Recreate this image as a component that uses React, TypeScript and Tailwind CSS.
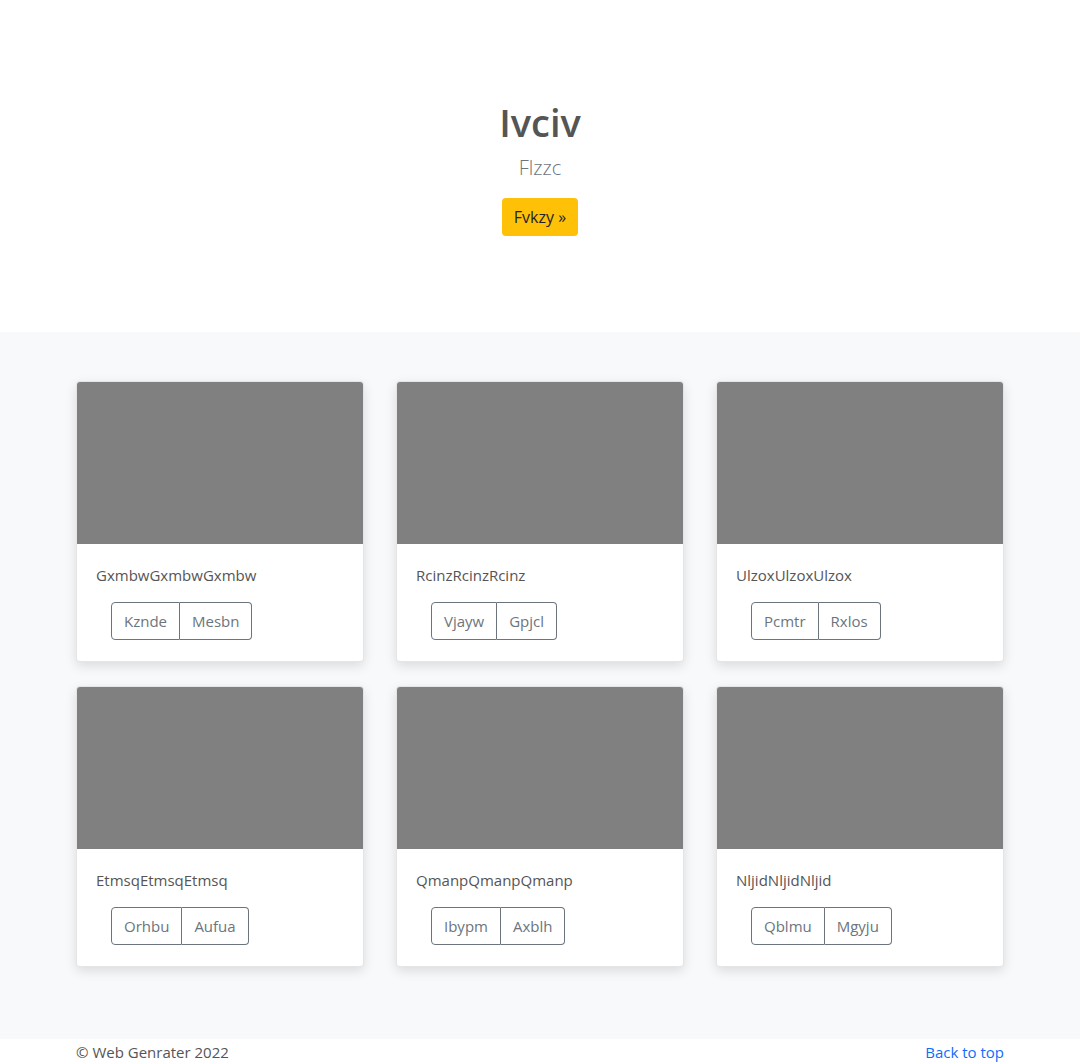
import React from "react";

const cards = [
  { t: "GxmbwGxmbwGxmbw", a: "Kznde", b: "Mesbn" },
  { t: "RcinzRcinzRcinz", a: "Vjayw", b: "Gpjcl" },
  { t: "UlzoxUlzoxUlzox", a: "Pcmtr", b: "Rxlos" },
  { t: "EtmsqEtmsqEtmsq", a: "Orhbu", b: "Aufua" },
  { t: "QmanpQmanpQmanp", a: "Ibypm", b: "Axblh" },
  { t: "NljidNljidNljid", a: "Qblmu", b: "Mgyju" },
];

export default function App() {
  return (
    <div className="min-h-[1064px] bg-white text-[#212529]" style={{ fontFamily: '"Open Sans", sans-serif' }}>
      <section className="h-[332px] flex flex-col items-center pt-[96px]">
        <h1 className="text-[38px] leading-[52px] font-semibold text-[#555]">Ivciv</h1>
        <p className="mt-[5px] text-[20px] leading-[30px] font-light text-[#6c757d]">Flzzc</p>
        <a className="mt-[15px] h-[38px] px-[12px] flex items-center rounded-[4px] bg-[#ffc107] text-[16px] text-[#212529]">Fvkzy »</a>
      </section>
      <section className="bg-[#f8f9fa] pt-[49px] pb-[72px]">
        <div className="w-[928px] mx-auto grid grid-cols-3 gap-x-[32px] gap-y-[24px]">
          {cards.map((c) => (
            <div key={c.t} className="bg-white rounded-[4px] overflow-hidden shadow-[0_4px_12px_rgba(0,0,0,0.12)] border border-[rgba(0,0,0,0.1)]">
              <div className="h-[162px] bg-[#808080]" />
              <div className="px-[19px] pt-[20px] pb-[21px]">
                <p className="text-[15px] leading-[22px] text-[#555]">{c.t}</p>
                <div className="mt-[16px] ml-[15px] inline-flex text-[15px] text-[#6c757d]">
                  <span className="h-[38px] px-[12px] flex items-center border border-[#6c757d] rounded-l-[4px]">{c.a}</span>
                  <span className="h-[38px] px-[12px] flex items-center border border-l-0 border-[#6c757d] rounded-r-[4px]">{c.b}</span>
                </div>
              </div>
            </div>
          ))}
        </div>
      </section>
      <footer className="w-[928px] mx-auto flex justify-between pt-[1px] text-[15px] leading-[24px]">
        <span className="text-[#555]">© Web Genrater 2022</span>
        <a className="text-[#0d6efd]">Back to top</a>
      </footer>
    </div>
  );
}
